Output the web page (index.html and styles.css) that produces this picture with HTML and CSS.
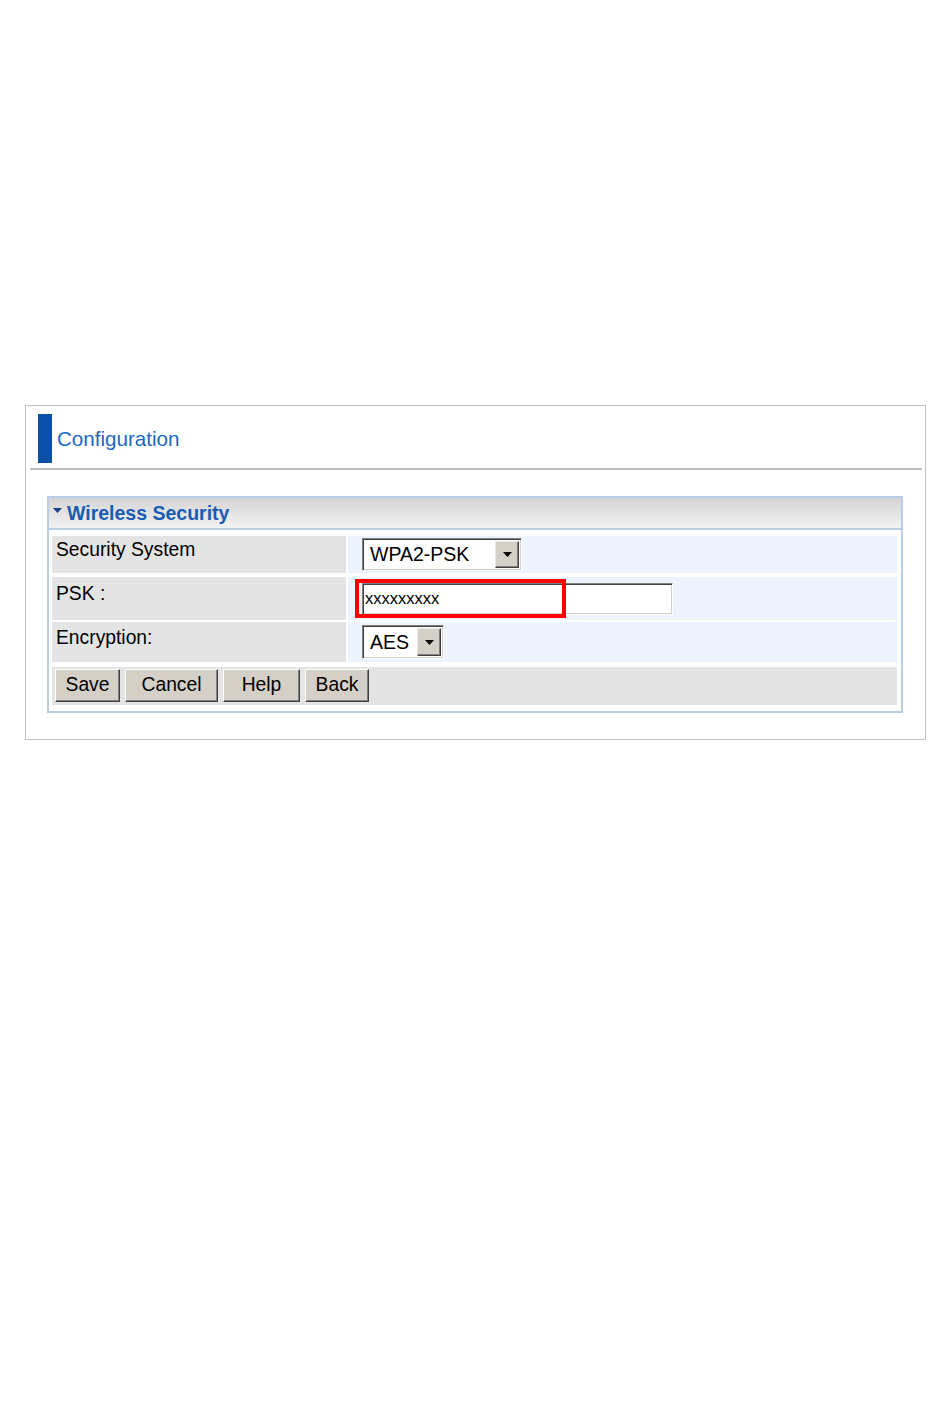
FILE: index.html
```html
<!DOCTYPE html>
<html lang="en">
<head>
  <meta charset="UTF-8">
  <title>Configuration - Wireless Security</title>
  <link rel="stylesheet" href="styles.css">
</head>
<body>
  <div class="page">
    <div class="title-bar">
      <span class="title-mark"></span>
      <span class="title-text">Configuration</span>
    </div>
    <div class="title-rule"></div>

    <div class="panel">
      <div class="panel-head">
        <svg class="caret" width="9" height="5" viewBox="0 0 9 5"><path d="M0 0H9L4.5 5Z" fill="#1a3f86"/></svg>
        <span>Wireless Security</span>
      </div>

      <div class="panel-body">
        <div class="row row-1">
          <div class="label">Security System</div>
          <div class="value">
            <div class="select select-wide">
              <span class="select-text">WPA2-PSK</span>
              <span class="select-btn"><svg width="9" height="5" viewBox="0 0 9 5"><path d="M0 0H9L4.5 5Z" fill="#000"/></svg></span>
            </div>
          </div>
        </div>

        <div class="row row-2">
          <div class="label">PSK :</div>
          <div class="value">
            <input type="text" class="text-input" value="xxxxxxxxx">
            <div class="highlight"></div>
          </div>
        </div>

        <div class="row row-3">
          <div class="label">Encryption:</div>
          <div class="value">
            <div class="select select-small">
              <span class="select-text">AES</span>
              <span class="select-btn"><svg width="9" height="5" viewBox="0 0 9 5"><path d="M0 0H9L4.5 5Z" fill="#000"/></svg></span>
            </div>
          </div>
        </div>

        <div class="buttons">
          <button class="btn btn-save">Save</button>
          <button class="btn btn-cancel">Cancel</button>
          <button class="btn btn-help">Help</button>
          <button class="btn btn-back">Back</button>
        </div>
      </div>
    </div>
  </div>
</body>
</html>
```

FILE: styles.css
```css
body {
  margin: 0;
  background: #fff;
  font-family: 'Liberation Sans', Arial, sans-serif;
  color: #000;
}

.page {
  margin: 405px 0 0 25px;
  width: 899px;
  height: 333px;
  border: 1px solid #c2c2c2;
}

.title-bar {
  display: flex;
  align-items: center;
  height: 49px;
  padding: 8px 0 0 12px;
}

.title-mark {
  width: 14px;
  height: 49px;
  background: #0b51a8;
}

.title-text {
  margin-left: 5px;
  font-size: 20.6px;
  color: #1b68c6;
}

.title-rule {
  height: 2px;
  margin: 5px 3px 0 4px;
  background: #bdbdbd;
}

.panel {
  margin: 26px 0 0 21px;
  width: 852px;
  border: 2px solid #b9cde5;
}

.panel-head {
  display: flex;
  align-items: center;
  height: 30px;
  padding-left: 4px;
  background: linear-gradient(#d5d5d5, #f2f2f2);
  border-bottom: 2px solid #b9cde5;
  font-size: 19.5px;
  font-weight: bold;
  color: #1a5cb4;
}

.caret {
  margin: 0 5px 6px 0;
}

.panel-body {
  padding: 6px 4px 6px 3px;
}

.row {
  display: grid;
  grid-template-columns: 294px 1fr;
  gap: 2px;
}

.row-1 { height: 37px; margin-bottom: 4px; }
.row-2 { height: 43px; margin-bottom: 2px; }
.row-3 { height: 40px; margin-bottom: 5px; }

.label {
  display: flex;
  align-items: center;
  padding: 0 0 9px 4px;
  background: #e4e4e4;
  font-size: 19.3px;
}

.value {
  position: relative;
  display: flex;
  align-items: center;
  padding-left: 14px;
  background: #edf4fd;
}

.select {
  display: flex;
  align-items: stretch;
  box-sizing: border-box;
  background: #fff;
  border: 1px solid;
  border-color: #808080 #fff #fff #808080;
  box-shadow: inset 1px 1px #404040, inset -1px -1px #d4d0c8;
  padding: 2px;
}

.select-wide { width: 160px; height: 33px; }
.select-small { width: 82px; height: 34px; }

.select-text {
  flex: 1;
  display: flex;
  align-items: center;
  padding-left: 5px;
  font-size: 19.5px;
  overflow: hidden;
}

.select-btn {
  display: flex;
  align-items: center;
  justify-content: center;
  width: 24px;
  box-sizing: border-box;
  background: #d4d0c8;
  border: 1px solid;
  border-color: #e8e6e1 #404040 #404040 #e8e6e1;
  box-shadow: inset -1px -1px #808080;
}

.text-input {
  box-sizing: border-box;
  width: 311px;
  height: 32px;
  margin: 0;
  padding: 0 2px;
  border: 1px solid;
  border-color: #808080 #fff #fff #808080;
  box-shadow: inset 1px 1px #404040, inset -1px -1px #d4d0c8;
  background: #fff;
  font-family: 'Liberation Sans', Arial, sans-serif;
  font-size: 16.5px;
  color: #000;
  outline: none;
}

.highlight {
  position: absolute;
  left: 7px;
  top: 2px;
  width: 203px;
  height: 31px;
  border: 4px solid #f00;
}

.buttons {
  display: flex;
  gap: 5px;
  height: 38px;
  box-sizing: border-box;
  padding: 2px 3px;
  background: #e4e4e4;
}

.btn {
  height: 33px;
  padding: 0 0 2px;
  background: #d4d0c8;
  border: 1px solid;
  border-color: #fff #404040 #404040 #fff;
  box-shadow: inset -1px -1px #808080;
  font-family: 'Liberation Sans', Arial, sans-serif;
  font-size: 19.3px;
  color: #000;
}

.btn-save { width: 65px; }
.btn-cancel { width: 93px; }
.btn-help { width: 77px; }
.btn-back { width: 64px; }
```
